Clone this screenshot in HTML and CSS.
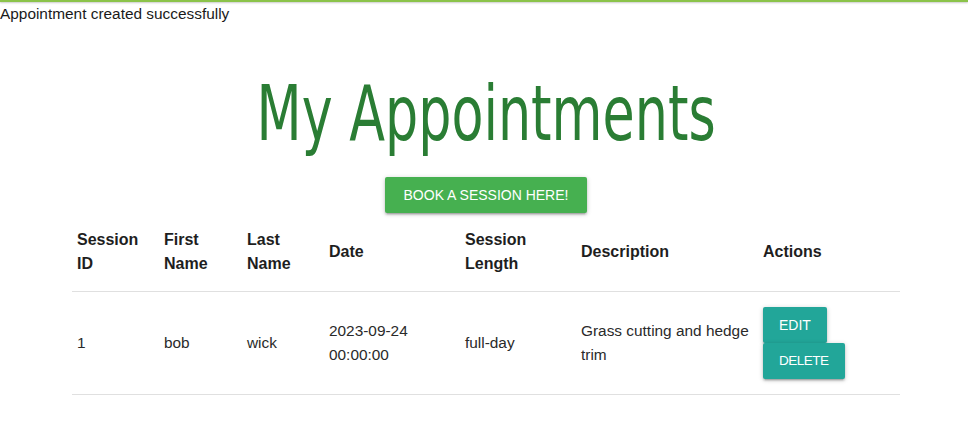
FILE: index.html
```html
<!DOCTYPE html>
<html lang="en">
<head>
<meta charset="utf-8">
<title>My Appointments</title>
<link rel="stylesheet" href="styles.css">
</head>
<body>
<div class="topbar"></div>
<div class="flash">Appointment created successfully</div>
<main class="container">
  <h1 class="title"><span class="title-text">My Appointments</span></h1>
  <div class="book-row"><a class="btn btn-green" href="#">Book a session here!</a></div>
  <table class="appts">
    <colgroup>
      <col class="c-id"><col class="c-first"><col class="c-last"><col class="c-date"><col class="c-len"><col class="c-desc"><col class="c-act">
    </colgroup>
    <thead>
      <tr>
        <th>Session ID</th>
        <th>First Name</th>
        <th>Last Name</th>
        <th>Date</th>
        <th>Session Length</th>
        <th>Description</th>
        <th>Actions</th>
      </tr>
    </thead>
    <tbody>
      <tr>
        <td>1</td>
        <td>bob</td>
        <td>wick</td>
        <td>2023-09-24 00:00:00</td>
        <td>full-day</td>
        <td>Grass cutting and hedge trim</td>
        <td>
          <div class="actions">
            <a class="btn btn-teal" href="#">Edit</a>
            <a class="btn btn-teal btn-delete" href="#">Delete</a>
          </div>
        </td>
      </tr>
    </tbody>
  </table>
</main>
</body>
</html>
```

FILE: styles.css
```css
html, body {
  margin: 0;
  padding: 0;
  background: #ffffff;
}

body {
  font-family: "Liberation Sans", Arial, sans-serif;
  color: rgba(0, 0, 0, 0.87);
  font-size: 15.4px;
  line-height: 24px;
}

.topbar {
  height: 2px;
  background: #8bc34a;
  box-shadow: 0 1px 2px rgba(0, 0, 0, 0.22);
}

.flash {
  color: #1a1a1a;
  height: 24px;
}

.container {
  width: 828px;
  margin: 0 0 0 72px;
}

.title {
  margin: 50px 0 25px;
  text-align: center;
  font-family: "DejaVu Sans Condensed", "DejaVu Sans", sans-serif;
  font-weight: normal;
  font-size: 76px;
  line-height: 76px;
  height: 76px;
  color: #2a7d34;
}

.title-text {
  display: inline-block;
  transform: scaleX(0.765);
  transform-origin: center;
  white-space: nowrap;
}

.book-row {
  display: flex;
  justify-content: center;
}

.btn {
  display: inline-block;
  height: 36px;
  line-height: 36px;
  padding: 0 19px;
  font-family: "Liberation Sans", Arial, sans-serif;
  font-size: 14px;
  text-transform: uppercase;
  color: #ffffff;
  text-decoration: none;
  border-radius: 2px;
  white-space: nowrap;
  box-shadow: 0 2px 2px 0 rgba(0, 0, 0, 0.14), 0 3px 1px -2px rgba(0, 0, 0, 0.12), 0 1px 5px 0 rgba(0, 0, 0, 0.2);
}

.btn-green {
  background: #46b050;
}

.btn-teal {
  background: #22a699;
  padding: 0 16px;
}

.btn-delete {
  font-size: 13.5px;
  letter-spacing: -0.5px;
  padding: 0 16px;
}

.appts {
  width: 828px;
  table-layout: fixed;
  border-collapse: collapse;
}

.c-id { width: 87px; }
.c-first { width: 83px; }
.c-last { width: 82px; }
.c-date { width: 136px; }
.c-len { width: 116px; }
.c-desc { width: 182px; }
.c-act { width: 142px; }

.appts tr {
  border-bottom: 1px solid rgba(0, 0, 0, 0.12);
}

.appts th,
.appts td {
  padding: 15px 5px;
  text-align: left;
  vertical-align: middle;
  line-height: 24px;
}

.appts th {
  font-size: 16px;
  font-weight: bold;
  color: #1e1e1e;
}

.appts td {
  font-size: 15.4px;
  color: #2a2a2a;
}

.actions {
  display: flex;
  flex-direction: column;
  align-items: flex-start;
}
```
